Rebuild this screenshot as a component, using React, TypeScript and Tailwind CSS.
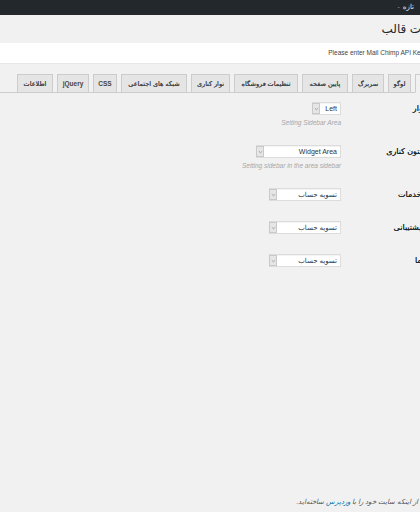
const tabs = [
  { label: "عمومی", w: "w-[30px]", active: true },
  { label: "لوگو", w: "w-[23px]" },
  { label: "سربرگ", w: "w-[32px]" },
  { label: "پایین صفحه", w: "w-[46px]" },
  { label: "تنظیمات فروشگاه", w: "w-[64px]" },
  { label: "نوار کناری", w: "w-[39px]" },
  { label: "شبکه های اجتماعی", w: "w-[66px]" },
  { label: "CSS", w: "w-[24px]", latin: true },
  { label: "jQuery", w: "w-[32px]", latin: true },
  { label: "اطلاعات", w: "w-[36px]" },
]

function Chevron() {
  return (
    <svg width="5" height="4" viewBox="0 0 5 4" fill="none">
      <path d="M0.8 1.2 L2.5 2.8 L4.2 1.2" stroke="#888" strokeWidth="0.7" />
    </svg>
  )
}

function Select({ value, width, ltr }: { value: string; width: string; ltr?: boolean }) {
  return (
    <div className={`${width} h-[13px] flex border border-[#dcdcdc] bg-white shadow-[inset_0_1px_1px_rgba(0,0,0,0.05)]`}>
      <div className="flex-1 pr-[3px] text-[7px] leading-[11px] text-[#333] truncate">
        {ltr ? <span dir="ltr">{value}</span> : value}
      </div>
      <div className="w-[8px] h-[11px] bg-[#e6e6e6] border border-[#c9c9c9] flex items-center justify-center -ml-[1px]">
        <Chevron />
      </div>
    </div>
  )
}

interface RowProps {
  label: string
  height: string
  children: React.ReactNode
}

function Row({ label, height, children }: RowProps) {
  return (
    <div className={`flex items-start pr-[36px] ${height}`}>
      <div className="w-[103px] shrink-0 text-[8px] leading-[13px] text-[#23282d] whitespace-nowrap [text-shadow:0_0_0.3px_#23282d]">
        {label}
      </div>
      <div className="flex flex-col items-start">{children}</div>
    </div>
  )
}

export default function App() {
  return (
    <div className="w-[420px] h-[512px] overflow-hidden bg-[#f1f1f1] font-['Liberation_Sans','DejaVu_Sans',sans-serif]">
      {/* Admin bar */}
      <div dir="rtl" className="h-[15px] bg-[#23282d] flex items-center pr-[6px] text-[7px] text-[#eeeeee]">
        <span>تازه</span>
        <span className="mr-[3px] text-[#999]">-</span>
      </div>

      <div dir="rtl" className="w-[480px] h-[497px] flex flex-col">
        {/* Title */}
        <h1 className="h-[28px] pr-[28px] text-[12px] leading-[28px] text-[#23282d] whitespace-nowrap">تنظیمات قالب</h1>

        {/* Notice */}
        <div className="h-[20px] bg-white shadow-[0_1px_1px_rgba(0,0,0,0.04)] pr-[56px] text-[6.5px] leading-[20px] text-[#444] whitespace-nowrap">
          <span dir="ltr">Please enter Mail Chimp API Key</span>
        </div>

        {/* Tabs */}
        <div className="mt-[11px] flex gap-[4px] pr-[35px] border-b border-[#ccc] h-[19px]">
          {tabs.map((t) => (
            <div
              key={t.label}
              className={`${t.w} h-[18px] shrink-0 border border-[#ccc] flex items-center justify-center whitespace-nowrap text-[6.5px] ${
                t.latin ? "font-bold" : "[text-shadow:0_0_0.3px_#444]"
              } ${t.active ? "bg-[#f1f1f1] border-b-[#f1f1f1] h-[19px] text-[#000]" : "bg-[#e5e5e5] border-b-0 text-[#444]"}`}
            >
              {t.label}
            </div>
          ))}
        </div>

        {/* Form */}
        <div className="pt-[9px] flex flex-col">
          <Row label="جهت نوار" height="h-[43px]">
            <Select value="Left" width="w-[29px]" ltr />
            <div className="mt-[3px] text-[6.5px] leading-[9px] italic text-[#a7a7a7] whitespace-nowrap">
              <span dir="ltr">Setting Sidebar Area</span>
            </div>
          </Row>
          <Row label="محل ستون کناری" height="h-[43px]">
            <Select value="Widget Area" width="w-[85px]" ltr />
            <div className="mt-[3px] text-[6.5px] leading-[9px] italic text-[#a7a7a7] whitespace-nowrap">
              <span dir="ltr">Setting sidebar in the area sidebar</span>
            </div>
          </Row>
          <Row label="صفحه خدمات" height="h-[33px]">
            <Select value="تسویه حساب" width="w-[72px]" />
          </Row>
          <Row label="صفحه پشتیبانی" height="h-[33px]">
            <Select value="تسویه حساب" width="w-[72px]" />
          </Row>
          <Row label="درباره ما" height="h-[33px]">
            <Select value="تسویه حساب" width="w-[72px]" />
          </Row>
        </div>

        {/* Footer */}
        <div className="mt-auto h-[20px] pr-[22px] text-[7px] leading-[20px] italic text-[#555] whitespace-nowrap">
          سپاس‌گزاریم از اینکه سایت خود را با <span className="text-[#0073aa]">وردپرس</span> ساخته‌اید.
        </div>
      </div>
    </div>
  )
}
